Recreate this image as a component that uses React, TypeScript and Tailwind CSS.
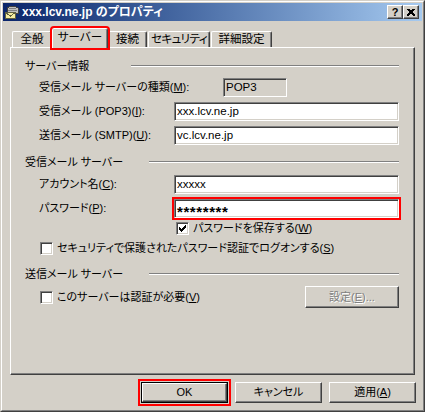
import type { ReactNode } from 'react'

// Win2k 3D borders
const RAISED =
  'border border-t-white border-l-white border-r-[#404040] border-b-[#404040] shadow-[inset_-1px_-1px_#808080]'
const SUNKEN =
  'border border-t-[#808080] border-l-[#808080] border-r-white border-b-white shadow-[inset_1px_1px_#404040,inset_-1px_-1px_#d4d0c8]'

const U = ({ children }: { children: ReactNode }) => (
  <u className="underline underline-offset-[1px]">{children}</u>
)

const Field = ({
  children,
  readOnly,
  mark,
  className = '',
}: {
  children: ReactNode
  readOnly?: boolean
  mark?: boolean
  className?: string
}) => (
  <div
    className={`flex h-[19px] items-center pl-[2px] text-[11.5px] leading-none ${SUNKEN} ${
      readOnly ? 'bg-[#d4d0c8]' : 'bg-white'
    } ${mark ? 'outline-2 outline-[#ff0000]' : ''} ${className}`}
  >
    {children}
  </div>
)

// checkmark pixels (7x7)
const CHECK_PX = [
  [6, 0],
  [5, 1], [6, 1],
  [0, 2], [4, 2], [5, 2], [6, 2],
  [0, 3], [1, 3], [3, 3], [4, 3], [5, 3],
  [0, 4], [1, 4], [2, 4], [3, 4], [4, 4],
  [1, 5], [2, 5], [3, 5],
  [2, 6],
]

const Check = ({ checked }: { checked?: boolean }) => (
  <span
    className={`flex h-[13px] w-[13px] shrink-0 items-center justify-center bg-white ${SUNKEN}`}
  >
    {checked && (
      <svg width="7" height="7" viewBox="0 0 7 7" shapeRendering="crispEdges">
        {CHECK_PX.map(([x, y]) => (
          <rect key={`${x}-${y}`} x={x} y={y} width="1" height="1" fill="#000" />
        ))}
      </svg>
    )}
  </span>
)

const GroupHeader = ({ label, lineFrom }: { label: string; lineFrom: string }) => (
  <div className="flex h-[14px] items-center">
    <span className={`${lineFrom} shrink-0 leading-none`}>{label}</span>
    <div className="flex-1 border-t border-b border-t-[#808080] border-b-white" />
  </div>
)

const PushButton = ({
  children,
  isDefault,
  mark,
}: {
  children: ReactNode
  isDefault?: boolean
  mark?: boolean
}) =>
  isDefault ? (
    <div
      className={`h-[21px] w-[87px] border border-black ${
        mark ? 'outline-2 outline-offset-1 outline-[#ff0000]' : ''
      }`}
    >
      <div className={`flex h-full items-center justify-center leading-none ${RAISED}`}>
        {children}
      </div>
    </div>
  ) : (
    <div className={`flex h-[21px] w-[87px] items-center justify-center leading-none ${RAISED}`}>
      {children}
    </div>
  )

const MailIcon = () => (
  <svg width="16" height="16" viewBox="0 0 16 16" shapeRendering="crispEdges">
    {/* server dome */}
    <path d="M3 7 L3 4 Q8 0 14 4 L14 9 L3 9 Z" fill="#c0c0c0" stroke="#404040" strokeWidth="1" />
    <path d="M5 4 H12 M4 6 H13" stroke="#808080" strokeWidth="1" />
    {/* envelope */}
    <rect x="1.5" y="8.5" width="10" height="6" fill="#f4eca0" stroke="#606040" />
    <path d="M1.5 8.5 L6.5 12 L11.5 8.5" fill="none" stroke="#606040" />
  </svg>
)

const TitleButton = ({ children }: { children: ReactNode }) => (
  <div className={`flex h-[14px] w-[16px] items-center justify-center bg-[#d4d0c8] ${RAISED}`}>
    {children}
  </div>
)

const TABS = [
  { label: '全般', w: 'w-[40px] ml-[2px]' },
  { label: 'サーバー', w: 'w-[56px]', active: true },
  { label: '接続', w: 'w-[39px]' },
  { label: 'セキュリティ', w: 'w-[62px] ml-px tracking-[-0.6px]' },
  { label: '詳細設定', w: 'w-[61px] ml-px' },
]

export default function App() {
  return (
    <div className="h-[412px] w-[425px] border border-t-[#d4d0c8] border-l-[#d4d0c8] border-r-[#404040] border-b-[#404040] bg-[#d4d0c8] font-['Liberation_Sans','Noto_Sans_CJK_JP',sans-serif] text-[11px] text-black [font-feature-settings:'palt']">
      <div className="flex h-full flex-col border border-t-white border-l-white border-r-[#808080] border-b-[#808080] p-px">
        {/* title bar */}
        <div className="flex h-[18px] shrink-0 items-center bg-gradient-to-r from-[#0a246a] to-[#a6caf0] pl-px pr-[3px]">
          <MailIcon />
          <span className="ml-[2px] text-[12px] font-bold leading-none text-white">
            xxx.lcv.ne.jp のプロパティ
          </span>
          <div className="ml-auto flex">
            <TitleButton>
              <span className="text-[11px] font-bold leading-none">?</span>
            </TitleButton>
            <TitleButton>
              <svg width="8" height="7" viewBox="0 0 8 7" shapeRendering="crispEdges">
                <path d="M0.5 0 L7.5 7 M1.5 0 L7.5 6 M7.5 0 L0.5 7 M6.5 0 L0.5 6" stroke="#000" strokeWidth="1" />
              </svg>
            </TitleButton>
          </div>
        </div>

        {/* tabs */}
        <div className="mt-[7px] flex h-[19px] shrink-0 items-end pl-[7px] text-[11.5px]">
          {TABS.map((t) =>
            t.active ? (
              <div
                key={t.label}
                className={`relative z-10 -mb-px flex h-[20px] items-start justify-center whitespace-nowrap rounded-t-[2px] border-t border-l border-r border-t-white border-l-white border-r-[#404040] bg-[#d4d0c8] pt-[3px] leading-none shadow-[inset_-1px_0_#808080] outline-2 outline-[#ff0000] ${t.w}`}
              >
                {t.label}
              </div>
            ) : (
              <div
                key={t.label}
                className={`flex h-[16px] items-center justify-center whitespace-nowrap rounded-t-[2px] border-t border-l border-r border-t-white border-l-white border-r-[#404040] pt-px leading-none shadow-[inset_-1px_0_#808080] ${t.w}`}
              >
                {t.label}
              </div>
            )
          )}
        </div>

        {/* tab panel */}
        <div className="ml-[7px] flex h-[328px] w-[405px] shrink-0 flex-col border border-t-white border-l-white border-r-[#404040] border-b-[#404040] pl-[14px] pr-[15px] pt-[11px] shadow-[inset_-1px_-1px_#808080]">
          <GroupHeader label="サーバー情報" lineFrom="w-[106px]" />

          <div className="mt-[5px] flex items-center">
            <span className="w-[198px] shrink-0 pl-[14px] leading-none">
              受信メール サーバーの種類(<U>M</U>):
            </span>
            <Field readOnly className="w-[64px]">POP3</Field>
          </div>
          <div className="mt-[5px] flex items-center">
            <span className="w-[149px] shrink-0 pl-[14px] leading-none">
              受信メール (POP3)(<U>I</U>):
            </span>
            <Field className="flex-1">xxx.lcv.ne.jp</Field>
          </div>
          <div className="mt-[5px] flex items-center">
            <span className="w-[149px] shrink-0 pl-[14px] leading-none">
              送信メール (SMTP)(<U>U</U>):
            </span>
            <Field className="flex-1">vc.lcv.ne.jp</Field>
          </div>

          <div className="mt-[10px]">
            <GroupHeader label="受信メール サーバー" lineFrom="w-[124px]" />
          </div>
          <div className="mt-[6px] flex items-center">
            <span className="w-[149px] shrink-0 pl-[14px] leading-none">
              アカウント名(<U>C</U>):
            </span>
            <Field className="flex-1">xxxxx</Field>
          </div>
          <div className="mt-[5px] flex items-center">
            <span className="w-[149px] shrink-0 pl-[14px] leading-none">
              パスワード(<U>P</U>):
            </span>
            <Field mark className="flex-1">
              <span className="translate-y-[3px] text-[15px] font-bold leading-none tracking-[0.6px]">
                ********
              </span>
            </Field>
          </div>
          <div className="mt-[4px] flex items-center pl-[151px]">
            <Check checked />
            <span className="ml-[4px] leading-none">
              パスワードを保存する(<U>W</U>)
            </span>
          </div>
          <div className="mt-[7px] flex items-center pl-[15px]">
            <Check />
            <span className="ml-[4px] leading-none">
              セキュリティで保護されたパスワード認証でログオンする(<U>S</U>)
            </span>
          </div>

          <div className="mt-[12px]">
            <GroupHeader label="送信メール サーバー" lineFrom="w-[124px]" />
          </div>
          <div className="mt-[5px] flex h-[22px] items-center pl-[15px]">
            <Check />
            <span className="ml-[4px] leading-none">
              このサーバーは認証が必要(<U>V</U>)
            </span>
            <div
              className={`ml-auto flex h-[22px] w-[94px] items-center justify-center leading-none text-[#808080] [text-shadow:1px_1px_0_#fff] ${RAISED}`}
            >
              設定(<U>E</U>)...
            </div>
          </div>
        </div>

        {/* dialog buttons */}
        <div className="mt-[7px] flex shrink-0 justify-end gap-[7px] pr-[6px]">
          <PushButton isDefault mark>
            OK
          </PushButton>
          <PushButton>キャンセル</PushButton>
          <PushButton>
            適用(<U>A</U>)
          </PushButton>
        </div>
      </div>
    </div>
  )
}
